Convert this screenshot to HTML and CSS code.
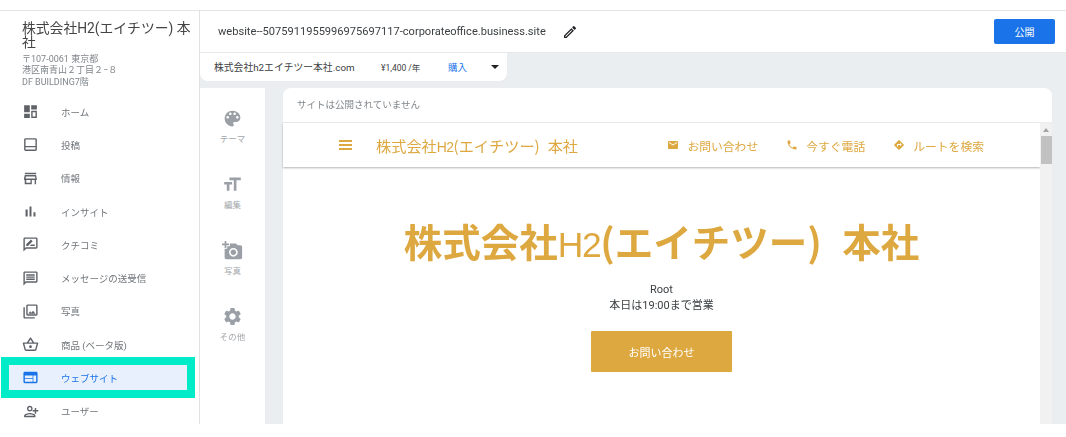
FILE: index.html
```html
<!DOCTYPE html>
<html lang="ja">
<head>
    <meta charset="UTF-8">
    <title>ウェブサイト</title>
    <link rel="stylesheet" href="styles.css">
</head>
<body>
    <div class="app">
        <aside class="sidebar">
            <div class="biz">
                <h1 class="biz-name">株式会社H2(エイチツー) 本社</h1>
                <p class="biz-address">〒107-0061 東京都<br>港区南青山２丁目２−８<br>DF BUILDING7階</p>
            </div>
            <nav class="nav">
                <a class="nav-item"><svg viewBox="0 0 24 24"><path d="M3 3h8v10H3zM13 3h8v6h-8zM3 15h8v6H3zM13 11h8v10h-8zm2 2v6h4v-6z"/></svg>ホーム</a>
                <a class="nav-item"><svg viewBox="0 0 24 24"><path d="M19 3H5c-1.1 0-2 .9-2 2v14c0 1.1.9 2 2 2h14c1.1 0 2-.9 2-2V5c0-1.1-.9-2-2-2zm0 2v9H5V5h14zM5 19v-3h14v3H5z"/></svg>投稿</a>
                <a class="nav-item"><svg viewBox="0 0 24 24"><path d="M18.36 9l.6 3H5.04l.6-3h12.72M20 4H4v2h16V4zm.16 3H3.84L2.84 12v2h1v6h10v-6h4v6h2v-6h1v-2l-1-5zM6 18v-4h6v4H6z"/></svg>情報</a>
                <a class="nav-item"><svg viewBox="0 0 24 24"><path d="M5 9.2h3V19H5zM10.6 5h2.8v14h-2.8zm5.6 8H19v6h-2.8z"/></svg>インサイト</a>
                <a class="nav-item"><svg viewBox="0 0 24 24"><path d="M20 2H4c-1.1 0-2 .9-2 2v18l4-4h14c1.1 0 2-.9 2-2V4c0-1.1-.9-2-2-2zm0 14H5.17L4 17.17V4h16v12zM6 14h2.5l6.6-6.6-2.5-2.5L6 11.5V14zm5 0h7v-2h-5z"/></svg>クチコミ</a>
                <a class="nav-item"><svg viewBox="0 0 24 24"><path d="M20 2H4c-1.1 0-2 .9-2 2v18l4-4h14c1.1 0 2-.9 2-2V4c0-1.1-.9-2-2-2zm0 14H5.17L4 17.17V4h16v12zM6 12h12v2H6zm0-3h12v2H6zm0-3h12v2H6z"/></svg>メッセージの送受信</a>
                <a class="nav-item"><svg viewBox="0 0 24 24"><path d="M20 4v12H8V4h12m0-2H8c-1.1 0-2 .9-2 2v12c0 1.1.9 2 2 2h12c1.1 0 2-.9 2-2V4c0-1.1-.9-2-2-2zm-8.5 9.67l1.69 2.26 2.48-3.1L19 15H9zM2 6v14c0 1.1.9 2 2 2h14v-2H4V6H2z"/></svg>写真</a>
                <a class="nav-item"><svg viewBox="0 0 24 24"><path d="M22 9h-4.79l-4.38-6.56c-.19-.28-.51-.42-.83-.42s-.64.14-.83.43L6.79 9H2c-.55 0-1 .45-1 1 0 .09.01.18.04.27l2.54 9.27c.23.84 1 1.46 1.92 1.46h13c.92 0 1.69-.62 1.93-1.46l2.54-9.27L23 10c0-.55-.45-1-1-1zM12 4.8L14.8 9H9.2L12 4.8zM18.5 19l-12.99.01L3.31 11H20.7l-2.2 8zM12 13c-1.1 0-2 .9-2 2s.9 2 2 2 2-.9 2-2-.9-2-2-2z"/></svg>商品 (ベータ版)</a>
                <a class="nav-item active"><svg viewBox="0 0 24 24"><path d="M20 4H4c-1.1 0-1.99.9-1.99 2L2 18c0 1.1.9 2 2 2h16c1.1 0 2-.9 2-2V6c0-1.1-.9-2-2-2zm-5 14H4v-4h11v4zm0-5H4V9h11v4zm5 5h-4V9h4v9z"/></svg>ウェブサイト</a>
                <a class="nav-item"><svg viewBox="0 0 24 24"><path d="M15 8c0-2.21-1.79-4-4-4S7 5.79 7 8s1.79 4 4 4 4-1.79 4-4zm-2 0c0 1.1-.9 2-2 2s-2-.9-2-2 .9-2 2-2 2 .9 2 2zM3 18v2h16v-2c0-2.66-5.33-4-8-4s-8 1.34-8 4zm2 0c.2-.71 3.3-2 6-2 2.69 0 5.78 1.28 6 2H5zm15-8V7h-2v3h-3v2h3v3h2v-3h3v-2h-3z"/></svg>ユーザー</a>
            </nav>
        </aside>

        <main class="main">
            <header class="topbar">
                <span class="site-url">website--5075911955996975697117-corporateoffice.business.site</span>
                <svg class="edit-icon" viewBox="0 0 24 24"><path d="M14.06 9.02l.92.92L5.92 19H5v-.92l9.06-9.06M17.66 3c-.25 0-.51.1-.7.29l-1.83 1.83 3.75 3.75 1.83-1.83c.39-.39.39-1.02 0-1.41l-2.34-2.34c-.2-.2-.45-.29-.71-.29zm-3.6 3.19L3 17.25V21h3.75L17.81 9.94l-3.75-3.75z"/></svg>
                <button class="publish">公開</button>
            </header>

            <div class="domain">
                <span class="domain-name">株式会社h2エイチツー本社.com</span>
                <span class="domain-price">¥1,400 /年</span>
                <span class="domain-buy">購入</span>
                <span class="domain-arrow"></span>
            </div>

            <div class="workspace">
                <div class="rail">
                    <div class="rail-item"><svg viewBox="0 0 24 24"><path d="M12 3c-4.97 0-9 4.03-9 9s4.03 9 9 9c.83 0 1.5-.67 1.5-1.5 0-.39-.15-.74-.39-1.01-.23-.26-.38-.61-.38-.99 0-.83.67-1.5 1.5-1.5H16c2.76 0 5-2.24 5-5 0-4.42-4.03-8-9-8zm-5.5 9c-.83 0-1.5-.67-1.5-1.5S5.67 9 6.5 9 8 9.67 8 10.5 7.33 12 6.5 12zm3-4C8.67 8 8 7.33 8 6.5S8.67 5 9.5 5s1.5.67 1.5 1.5S10.33 8 9.5 8zm5 0c-.83 0-1.5-.67-1.5-1.5S13.67 5 14.5 5s1.5.67 1.5 1.5S15.33 8 14.5 8zm3 4c-.83 0-1.5-.67-1.5-1.5S16.67 9 17.5 9s1.5.67 1.5 1.5-.67 1.5-1.5 1.5z"/></svg>テーマ</div>
                    <div class="rail-item"><svg viewBox="0 0 24 24"><path d="M21.5 4v3h-5v12h-3V7h-5V4h13zM2.5 9h9v3h-3v7h-3v-7h-3V9z"/></svg>編集</div>
                    <div class="rail-item"><svg viewBox="0 0 24 24"><path d="M3 4V1h2v3h3v2H5v3H3V6H0V4h3zm3 6V7h3V4h7l1.83 2H21c1.1 0 2 .9 2 2v12c0 1.1-.9 2-2 2H5c-1.1 0-2-.9-2-2V10h3zm7 9c2.76 0 5-2.24 5-5s-2.24-5-5-5-5 2.24-5 5 2.24 5 5 5zm-3.2-5c0 1.77 1.43 3.2 3.2 3.2s3.2-1.43 3.2-3.2-1.43-3.2-3.2-3.2-3.2 1.43-3.2 3.2z"/></svg>写真</div>
                    <div class="rail-item"><svg viewBox="0 0 24 24"><path d="M19.14 12.94c.04-.3.06-.61.06-.94 0-.32-.02-.64-.07-.94l2.03-1.58c.18-.14.23-.41.12-.61l-1.92-3.32c-.12-.22-.37-.29-.59-.22l-2.39.96c-.5-.38-1.03-.7-1.62-.94l-.36-2.54c-.04-.24-.24-.41-.48-.41h-3.84c-.24 0-.43.17-.47.41l-.36 2.54c-.59.24-1.13.57-1.62.94l-2.39-.96c-.22-.08-.47 0-.59.22L2.74 8.87c-.12.21-.08.47.12.61l2.03 1.58c-.05.3-.09.63-.09.94s.02.64.07.94l-2.03 1.58c-.18.14-.23.41-.12.61l1.92 3.32c.12.22.37.29.59.22l2.39-.96c.5.38 1.03.7 1.62.94l.36 2.54c.05.24.24.41.48.41h3.84c.24 0 .44-.17.47-.41l.36-2.54c.59-.24 1.13-.56 1.62-.94l2.39.96c.22.08.47 0 .59-.22l1.92-3.32c.12-.22.07-.47-.12-.61l-2.01-1.58zM12 15.6c-1.98 0-3.6-1.62-3.6-3.6s1.62-3.6 3.6-3.6 3.6 1.62 3.6 3.6-1.62 3.6-3.6 3.6z"/></svg>その他</div>
                </div>

                <section class="preview">
                    <div class="notice">サイトは公開されていません</div>
                    <div class="frame">
                        <div class="site">
                            <div class="site-nav">
                                <div class="site-brand">
                                    <span class="burger"></span>
                                    <span class="site-title">株式会社<span class="latin">H2</span>(エイチツー) 本社</span>
                                </div>
                                <div class="site-links">
                                    <a class="site-link"><svg viewBox="0 0 24 24"><path d="M20 4H4c-1.1 0-1.99.9-1.99 2L2 18c0 1.1.9 2 2 2h16c1.1 0 2-.9 2-2V6c0-1.1-.9-2-2-2zm0 4l-8 5-8-5V6l8 5 8-5v2z"/></svg>お問い合わせ</a>
                                    <a class="site-link"><svg viewBox="0 0 24 24"><path d="M6.62 10.79c1.44 2.83 3.76 5.14 6.59 6.59l2.2-2.2c.27-.27.67-.36 1.02-.24 1.12.37 2.33.57 3.57.57.55 0 1 .45 1 1V20c0 .55-.45 1-1 1-9.39 0-17-7.61-17-17 0-.55.45-1 1-1h3.5c.55 0 1 .45 1 1 0 1.25.2 2.45.57 3.57.11.35.03.74-.25 1.02l-2.2 2.2z"/></svg>今すぐ電話</a>
                                    <a class="site-link"><svg viewBox="0 0 24 24"><path d="M21.71 11.29l-9-9c-.39-.39-1.02-.39-1.41 0l-9 9c-.39.39-.39 1.02 0 1.41l9 9c.39.39 1.02.39 1.41 0l9-9c.39-.38.39-1.01 0-1.41zM14 14.5V12h-4v3H8v-4c0-.55.45-1 1-1h5V7.5l3.5 3.5-3.5 3.5z"/></svg>ルートを検索</a>
                                </div>
                            </div>
                            <div class="hero">
                                <h2 class="hero-title site-title">株式会社<span class="latin">H2</span>(エイチツー) 本社</h2>
                                <p class="hero-text">Root<br>本日は19:00まで営業</p>
                                <a class="hero-button">お問い合わせ</a>
                            </div>
                        </div>
                        <div class="scrollbar">
                            <span class="scroll-up"></span>
                            <span class="scroll-thumb"></span>
                        </div>
                    </div>
                </section>
            </div>
        </main>
    </div>
</body>
</html>
```

FILE: styles.css
```css
* {
    box-sizing: border-box;
}

html, body {
    height: 100%;
}

body {
    margin: 0;
    background: #fff;
    color: #5f6368;
    font-family: Roboto, "Noto Sans CJK JP", sans-serif;
    overflow: hidden;
    filter: blur(0.4px);
}

.app {
    display: flex;
    height: 414px;
    margin-top: 10px;
    border-top: 1px solid #e2e4e6;
}

/* left column */
.sidebar {
    flex: none;
    width: 200px;
    border-right: 1px solid #dfe1e4;
}

.biz {
    height: 84px;
    padding: 11px 6px 0 22px;
}

.biz-name {
    margin: 0;
    font-size: 13.8px;
    font-weight: 400;
    line-height: 13.5px;
    color: #444;
}

.biz-address {
    margin: 5px 0 0;
    font-size: 9px;
    line-height: 11.3px;
    color: #80868b;
}

.nav {
    display: flex;
    flex-direction: column;
}

.nav-item {
    display: flex;
    align-items: center;
    gap: 22px;
    height: 33.3px;
    padding-left: 22px;
    font-size: 9.5px;
    color: #70757a;
}

.nav-item svg {
    flex: none;
    width: 17px;
    height: 17px;
    fill: #5f6368;
}

.nav-item.active {
    height: 41px;
    margin: -4px 4px -4px 1px;
    padding-left: 21px;
    border: 8px solid #00ecc8;
    background: #e8f0fe;
    background-clip: padding-box;
    color: #1a73e8;
}

.nav-item.active svg {
    fill: #1a73e8;
    margin-left: -8px;
}

/* right column */
.main {
    flex: 1;
    display: flex;
    flex-direction: column;
    min-width: 0;
    background: #ebeef0;
}

.topbar {
    flex: none;
    display: flex;
    align-items: center;
    height: 42px;
    padding: 0 11px 0 18px;
    background: #fff;
    border-bottom: 1px solid #e6e8ea;
}

.site-url {
    font-size: 11.1px;
    color: #3c4043;
}

.edit-icon {
    width: 16px;
    height: 16px;
    margin-left: 16px;
    fill: #202124;
}

.publish {
    width: 61px;
    height: 25px;
    margin-left: auto;
    border: none;
    border-radius: 2px;
    background: #1a73e8;
    color: #fff;
    font-family: inherit;
    font-size: 10px;
}

.domain {
    flex: none;
    display: flex;
    align-items: center;
    width: 307px;
    height: 28px;
    padding-left: 14px;
    background: #fff;
    border-radius: 0 0 8px 8px;
    color: #3c4043;
}

.domain-name {
    width: 167px;
    font-size: 9.8px;
}

.domain-price {
    width: 67px;
    font-size: 8.5px;
}

.domain-buy {
    width: 43px;
    font-size: 9.5px;
    color: #1a73e8;
}

.domain-arrow {
    border: 4px solid transparent;
    border-top: 4px solid #202124;
    border-bottom: 0;
}

.workspace {
    flex: 1;
    display: flex;
    gap: 18px;
    margin-top: 7px;
    min-height: 0;
}

.rail {
    flex: none;
    width: 65px;
    padding-top: 20px;
    background: #fff;
}

.rail-item {
    display: flex;
    flex-direction: column;
    align-items: center;
    height: 66px;
    font-size: 8.5px;
    color: #a2a6ab;
}

.rail-item svg {
    width: 21px;
    height: 21px;
    margin-bottom: 3px;
    fill: #9aa0a6;
}

.preview {
    width: 769px;
    display: flex;
    flex-direction: column;
    background: #fff;
    border-radius: 8px 8px 0 0;
}

.notice {
    flex: none;
    height: 35px;
    padding: 9px 14px 0;
    font-size: 9.5px;
    color: #80868b;
    border-bottom: 1px solid #ebedef;
}

.frame {
    flex: 1;
    display: flex;
    min-height: 0;
}

.site {
    flex: 1;
    min-width: 0;
    display: flex;
    flex-direction: column;
}

.site-nav {
    flex: none;
    display: flex;
    align-items: center;
    justify-content: space-between;
    height: 44px;
    padding: 0 56px;
    box-shadow: 0 1px 2px rgba(0, 0, 0, 0.3);
    color: #dda840;
}

.site-brand {
    display: flex;
    align-items: center;
    gap: 24px;
}

.site-title {
    font-family: "Noto Sans CJK JP", sans-serif;
    font-size: 15.2px;
    word-spacing: 0.3em;
    white-space: nowrap;
}

.burger {
    width: 13px;
    height: 10px;
    border-top: 2px solid #dda840;
    border-bottom: 2px solid #dda840;
    position: relative;
}

.burger::after {
    content: "";
    position: absolute;
    left: 0;
    right: 0;
    top: 2px;
    height: 2px;
    background: #dda840;
}

.latin {
    font-family: "Liberation Sans", sans-serif;
    font-size: 0.92em;
    font-weight: 400;
    letter-spacing: -0.04em;
}

.site-links {
    display: flex;
    gap: 28px;
}

.site-link {
    display: flex;
    align-items: center;
    gap: 8px;
    font-size: 11.8px;
}

.site-link svg {
    width: 12px;
    height: 12px;
    fill: #dda840;
}

.hero {
    flex: 1;
    display: flex;
    flex-direction: column;
    align-items: center;
    padding-top: 47px;
}

.hero-title {
    margin: 0;
    font-size: 38.5px;
    font-weight: 700;
    line-height: 52px;
    color: #dda840;
}

.hero-text {
    margin: 11px 0 0;
    font-size: 11px;
    line-height: 16px;
    text-align: center;
    color: #3c4043;
}

.hero-button {
    display: flex;
    align-items: center;
    justify-content: center;
    width: 141px;
    height: 41px;
    margin-top: 17px;
    border-radius: 1px;
    background: #dda840;
    color: #fff;
    font-size: 11px;
}

.scrollbar {
    flex: none;
    width: 12px;
    display: flex;
    flex-direction: column;
    align-items: center;
    padding-top: 5px;
    background: #f1f1f1;
}

.scroll-up {
    border: 3px solid transparent;
    border-bottom: 4px solid #a3a3a3;
    border-top: 0;
}

.scroll-thumb {
    width: 11px;
    height: 28px;
    margin-top: 4px;
    background: #c1c1c1;
}
```
